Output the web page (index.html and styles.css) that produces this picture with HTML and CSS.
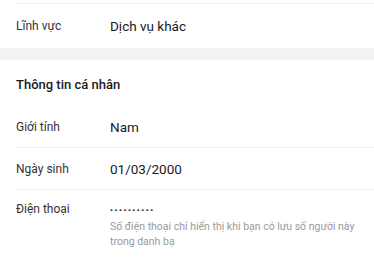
FILE: index.html
```html
<!DOCTYPE html>
<html lang="vi">
<head>
<meta charset="utf-8">
<link rel="stylesheet" href="styles.css">
</head>
<body>
<div class="section">
  <div class="prev-row"></div>
  <div class="row row-top">
    <div class="label">Lĩnh vực</div>
    <div class="value">Dịch vụ khác</div>
  </div>
</div>
<div class="band"></div>
<div class="section">
  <div class="heading">Thông tin cá nhân</div>
  <div class="row divided">
    <div class="label">Giới tính</div>
    <div class="value">Nam</div>
  </div>
  <div class="row divided">
    <div class="label">Ngày sinh</div>
    <div class="value">01/03/2000</div>
  </div>
  <div class="row row-phone">
    <div class="label">Điện thoại</div>
    <div class="value-col">
      <div class="dots">••••••••••</div>
      <div class="note">Số điện thoại chỉ hiển thị khi bạn có lưu số người này trong danh bạ</div>
    </div>
  </div>
</div>
</body>
</html>
```

FILE: styles.css
```css
* { box-sizing: border-box; }
html, body { margin: 0; padding: 0; background: #fff; }
body {
  font-family: Roboto, "Noto Sans", sans-serif;
  color: #222;
  width: 374px;
  overflow: hidden;
}
.section { background: #fff; }
.prev-row {
  height: 4px;
  margin-left: 16px;
  border-bottom: 1px solid #eeeff1;
}
.row {
  display: flex;
  align-items: center;
  margin-left: 16px;
  padding-right: 14px;
}
.row-top { height: 44px; }
.divided {
  height: 42px;
  border-bottom: 1px solid #eeeff1;
}
.label {
  width: 94px;
  flex: none;
  font-size: 12px;
  color: #333;
  line-height: 18px;
}
.value {
  font-size: 13.5px;
  color: #1a1a1a;
  line-height: 18px;
}
.band {
  height: 12px;
  background: #f1f2f4;
}
.heading {
  padding: 16px 16px 12px;
  font-size: 13px;
  font-weight: 500;
  line-height: 18px;
  color: #1a1a1a;
}
.row-phone {
  align-items: flex-start;
  padding-top: 10px;
  padding-bottom: 12px;
}
.value-col { flex: 1; }
.dots {
  font-size: 8px;
  font-weight: 700;
  line-height: 18px;
  padding-top: 2px;
  letter-spacing: 1.6px;
  color: #222;
}
.note {
  font-size: 10.5px;
  line-height: 15px;
  color: #9a9a9a;
  margin-top: -1px;
}
```
